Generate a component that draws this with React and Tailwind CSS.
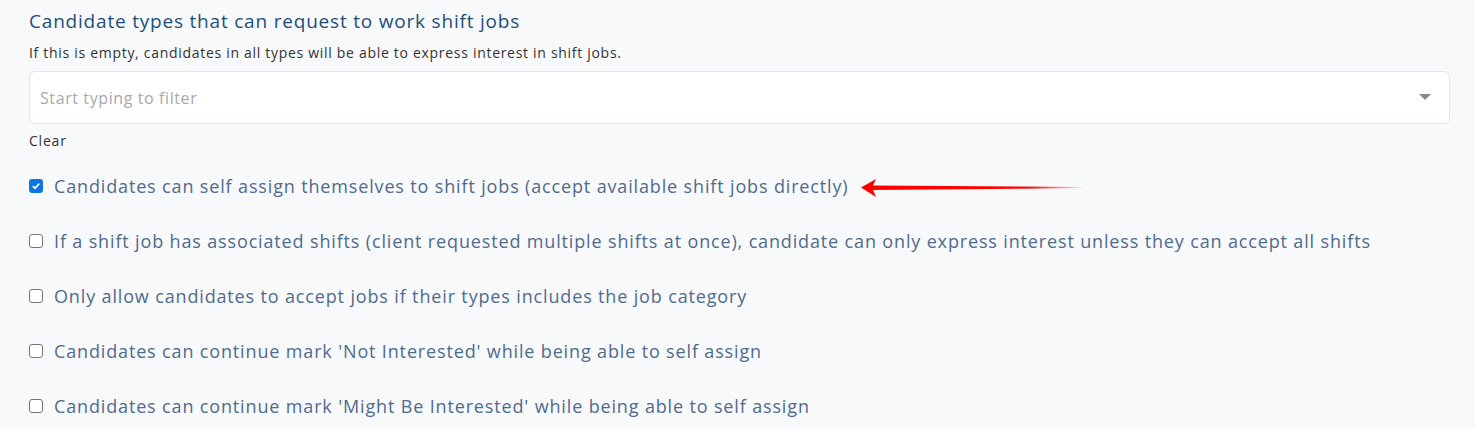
import React from 'react';

const options = [
  { label: 'Candidates can self assign themselves to shift jobs (accept available shift jobs directly)', checked: true, arrow: true },
  { label: 'If a shift job has associated shifts (client requested multiple shifts at once), candidate can only express interest unless they can accept all shifts' },
  { label: 'Only allow candidates to accept jobs if their types includes the job category' },
  { label: "Candidates can continue mark 'Not Interested' while being able to self assign" },
  { label: "Candidates can continue mark 'Might Be Interested' while being able to self assign" },
];

const Checkbox = ({ checked }) =>
  checked ? (
    <span className="w-[14px] h-[14px] rounded-[3px] bg-[#0b75e0] flex items-center justify-center shrink-0">
      <svg width="10" height="10" viewBox="0 0 10 10">
        <path d="M1.8 5.2 L4 7.3 L8.2 2.6" fill="none" stroke="white" strokeWidth="1.8" />
      </svg>
    </span>
  ) : (
    <span className="w-[14px] h-[14px] rounded-[3px] border border-[#767676] bg-white shrink-0" />
  );

const Arrow = () => (
  <svg width="228" height="20" viewBox="0 0 228 20" className="ml-[12px] mt-[4px]">
    <defs>
      <linearGradient id="fade" x1="0" x2="1" y1="0" y2="0">
        <stop offset="0.75" stopColor="#ff0000" />
        <stop offset="1" stopColor="#ff0000" stopOpacity="0" />
      </linearGradient>
    </defs>
    <path d="M1 9.5 L16 1 L13 7.5 L226 9 L226 10 L13 12 L16 19 Z" fill="url(#fade)" />
  </svg>
);

export default function App() {
  return (
    <div className="min-h-screen bg-[#f8f9fb] px-[29px] pt-[9px]" style={{ fontFamily: '"Open Sans", sans-serif' }}>
      <h2 className="text-[19px] leading-[24px] text-[#1f4e79] tracking-[0.8px]">Candidate types that can request to work shift jobs</h2>
      <p className="text-[14px] leading-[20px] mt-[10px] text-[#333] tracking-[0.7px]">
        If this is empty, candidates in all types will be able to express interest in shift jobs.
      </p>
      <div className="mt-[8px] h-[53px] w-[1421px] bg-white border border-[#e5e5e5] rounded-[6px] flex items-center justify-between pl-[10px] pr-[18px]">
        <span className="text-[16px] text-[#a8a8a8] tracking-[0.6px]">Start typing to filter</span>
        <svg width="12" height="7" viewBox="0 0 12 7">
          <path d="M0 0 L12 0 L6 6 Z" fill="#888" />
        </svg>
      </div>
      <div className="text-[14px] leading-[20px] mt-[7px] text-[#333] tracking-[0.8px]">Clear</div>
      <div className="mt-[23px] flex flex-col gap-[31px]">
        {options.map((o, i) => (
          <label key={i} className="flex items-center h-[24px]">
            <Checkbox checked={o.checked} />
            <span className="ml-[11px] text-[18px] text-[#4f6b8d] tracking-[0.85px] whitespace-nowrap">{o.label}</span>
            {o.arrow && <Arrow />}
          </label>
        ))}
      </div>
    </div>
  );
}
